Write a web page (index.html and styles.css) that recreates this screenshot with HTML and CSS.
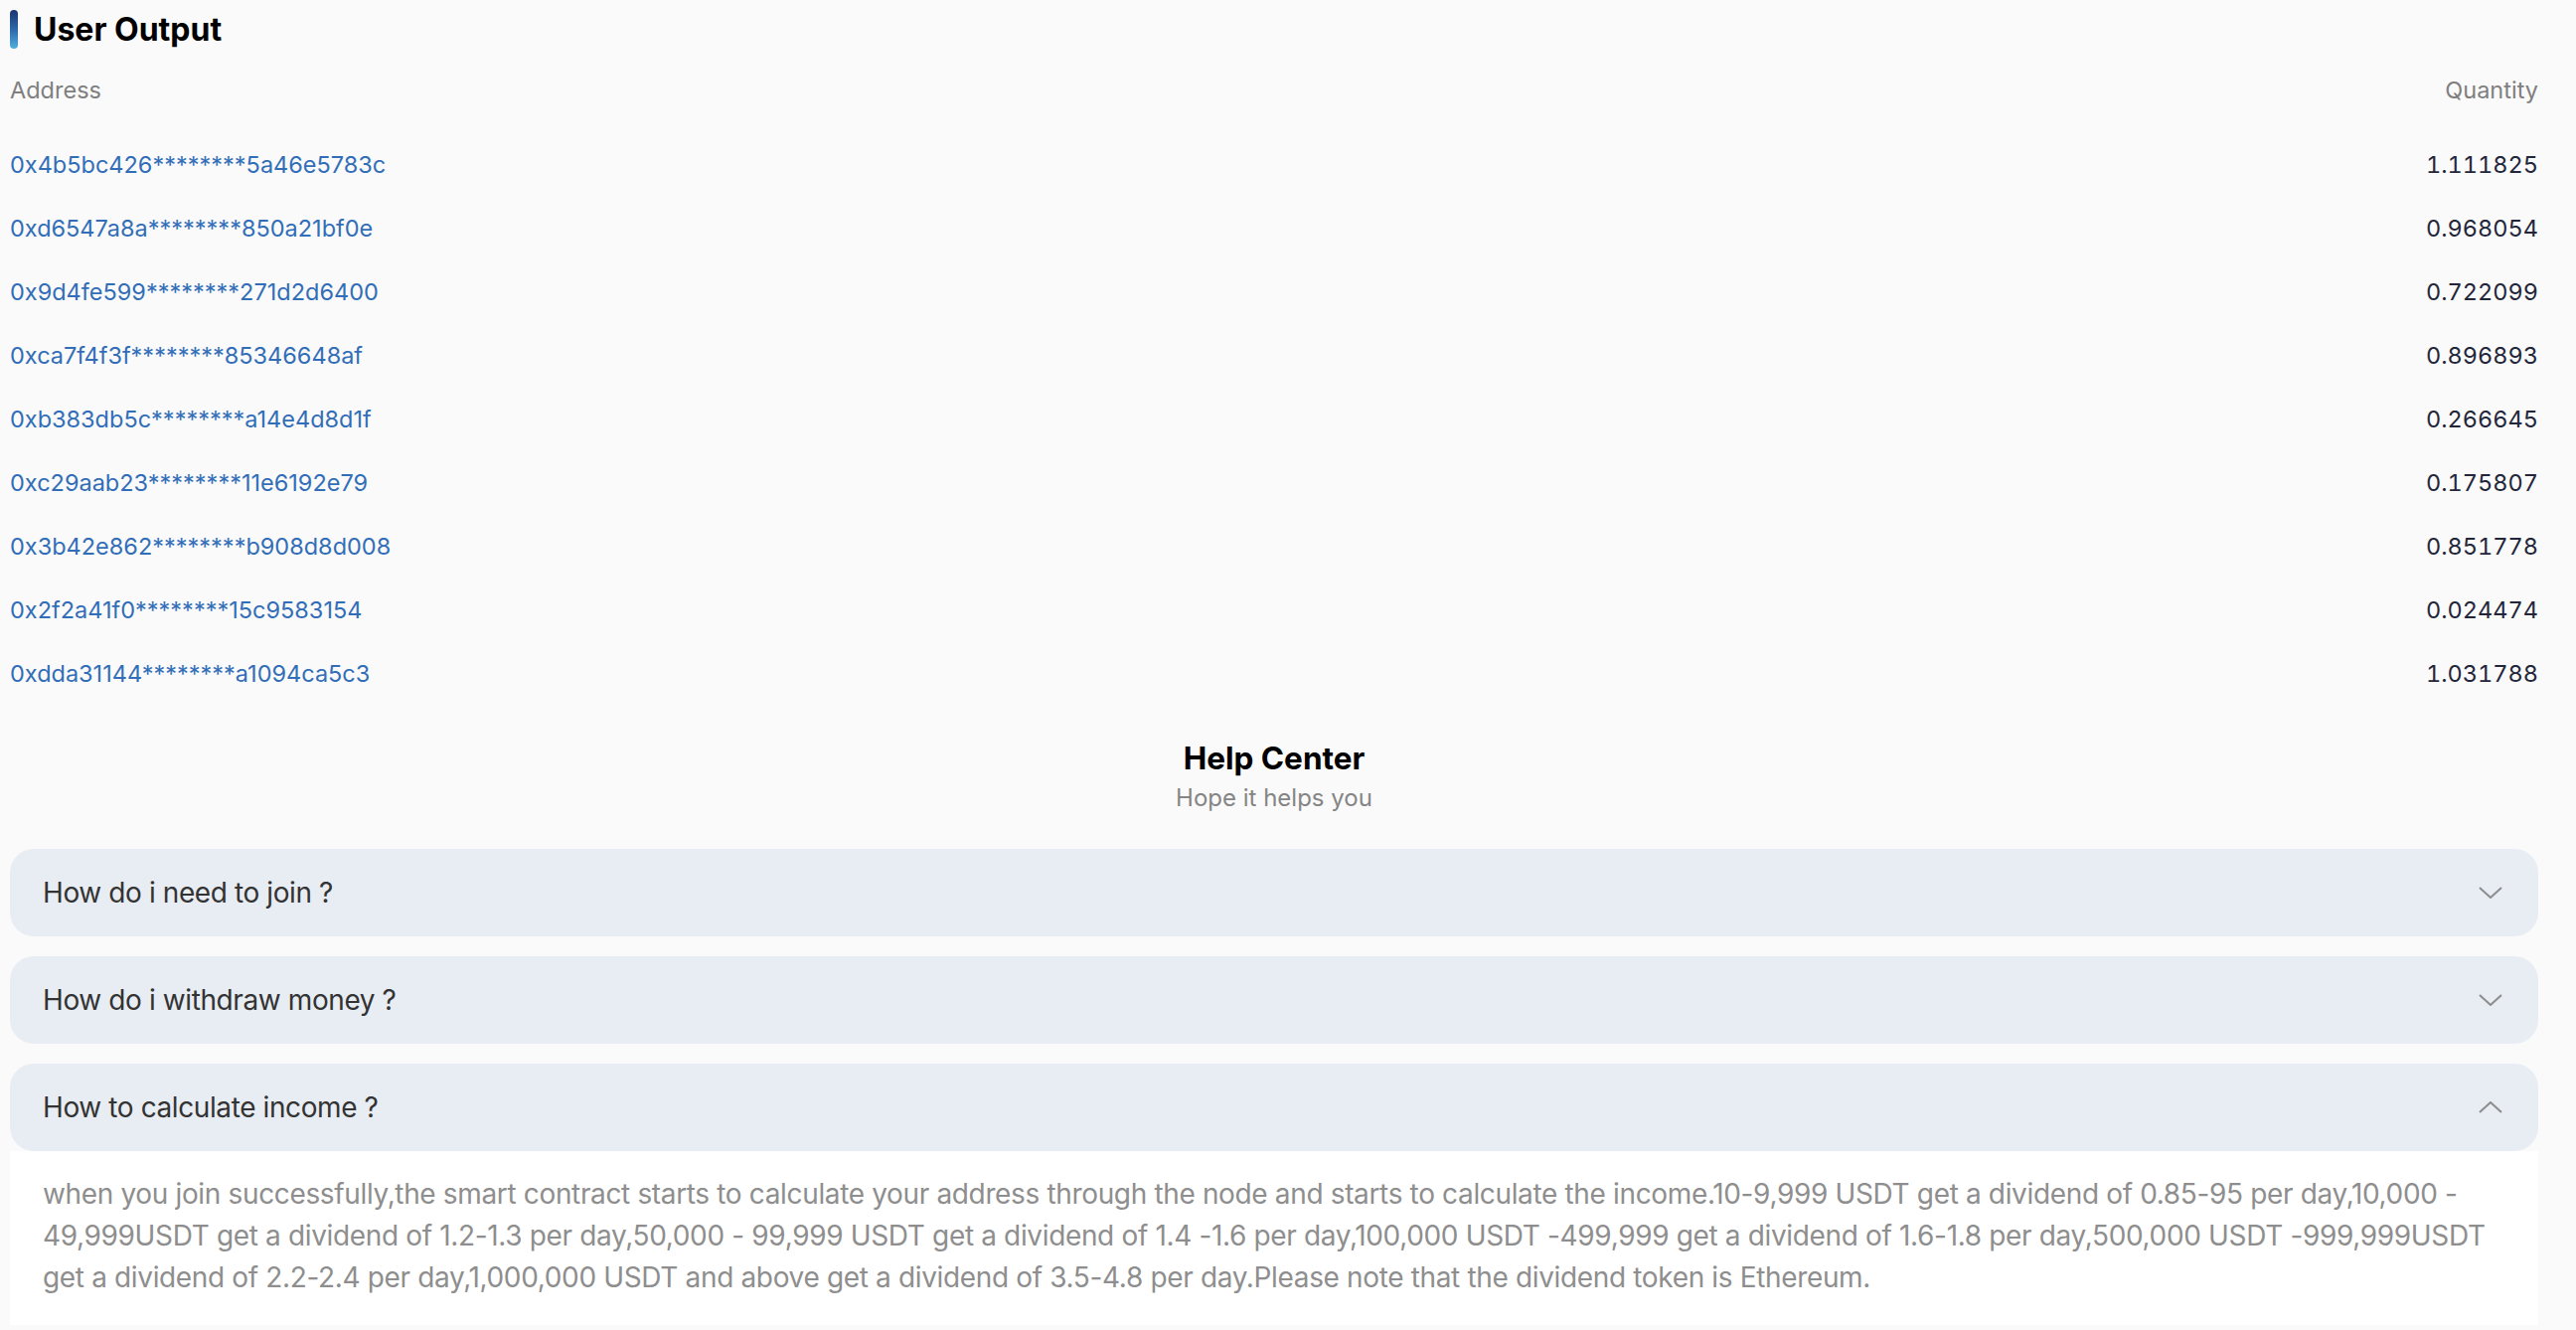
FILE: index.html
```html
<!DOCTYPE html>
<html lang="en">
<head>
<meta charset="utf-8">
<title>User Output</title>
<link rel="stylesheet" href="styles.css">
</head>
<body>
<div class="page">
  <div class="section-title">
    <span class="accent"></span>
    <h2>User Output</h2>
  </div>
  <div class="table">
    <div class="thead">
      <span>Address</span>
      <span>Quantity</span>
    </div>
    <div class="tbody">
      <div class="row"><span class="addr">0x4b5bc426********5a46e5783c</span><span class="qty">1.111825</span></div>
      <div class="row"><span class="addr">0xd6547a8a********850a21bf0e</span><span class="qty">0.968054</span></div>
      <div class="row"><span class="addr">0x9d4fe599********271d2d6400</span><span class="qty">0.722099</span></div>
      <div class="row"><span class="addr">0xca7f4f3f********85346648af</span><span class="qty">0.896893</span></div>
      <div class="row"><span class="addr">0xb383db5c********a14e4d8d1f</span><span class="qty">0.266645</span></div>
      <div class="row"><span class="addr">0xc29aab23********11e6192e79</span><span class="qty">0.175807</span></div>
      <div class="row"><span class="addr">0x3b42e862********b908d8d008</span><span class="qty">0.851778</span></div>
      <div class="row"><span class="addr">0x2f2a41f0********15c9583154</span><span class="qty">0.024474</span></div>
      <div class="row"><span class="addr">0xdda31144********a1094ca5c3</span><span class="qty">1.031788</span></div>
    </div>
  </div>

  <div class="help-head">
    <h2>Help Center</h2>
    <p>Hope it helps you</p>
  </div>

  <div class="faq">
    <div class="item">
      <div class="q">
        <span>How do i need to join ?</span>
        <svg class="chev" viewBox="0 0 24 12" width="24" height="12"><path d="M1 1 L12 11 L23 1" fill="none" stroke="#8c8c8c" stroke-width="2"/></svg>
      </div>
    </div>
    <div class="item">
      <div class="q">
        <span>How do i withdraw money ?</span>
        <svg class="chev" viewBox="0 0 24 12" width="24" height="12"><path d="M1 1 L12 11 L23 1" fill="none" stroke="#8c8c8c" stroke-width="2"/></svg>
      </div>
    </div>
    <div class="item open">
      <div class="q">
        <span>How to calculate income ?</span>
        <svg class="chev" viewBox="0 0 24 12" width="24" height="12"><path d="M1 11 L12 1 L23 11" fill="none" stroke="#8c8c8c" stroke-width="2"/></svg>
      </div>
      <div class="a">when you join successfully,the smart contract starts to calculate your address through the node and starts to calculate the income.10-9,999 USDT get a dividend of 0.85-95 per day,10,000 - 49,999USDT get a dividend of 1.2-1.3 per day,50,000 - 99,999 USDT get a dividend of 1.4 -1.6 per day,100,000 USDT -499,999 get a dividend of 1.6-1.8 per day,500,000 USDT -999,999USDT get a dividend of 2.2-2.4 per day,1,000,000 USDT and above get a dividend of 3.5-4.8 per day.Please note that the dividend token is Ethereum.</div>
    </div>
  </div>
</div>
</body>
</html>
```

FILE: styles.css
```css
html, body {
  margin: 0;
  padding: 0;
  background: #fafafa;
}
body {
  font-family: Inter, "Noto Sans", "Liberation Sans", sans-serif;
  color: #333;
}
.page {
  padding: 10px 38px 6px 10px;
}
.section-title {
  display: flex;
  align-items: center;
  gap: 16px;
  height: 39px;
}
.accent {
  width: 8px;
  height: 39px;
  border-radius: 4px;
  background: linear-gradient(180deg, #1c3470 0%, #2f6db0 55%, #4fb0dc 100%);
}
.section-title h2 {
  margin: 0;
  font-size: 32px;
  font-weight: 700;
  color: #000;
  letter-spacing: 0;
  line-height: 39px;
}
.thead {
  display: flex;
  justify-content: space-between;
  margin-top: 10px;
  height: 64px;
  line-height: 64px;
  font-size: 23.5px;
  color: #7f7f7f;
}
.tbody {
  margin-top: 11px;
}
.row {
  display: flex;
  justify-content: space-between;
  height: 64px;
  line-height: 64px;
  font-size: 23.5px;
}
.addr {
  color: #326eb8;
}
.qty {
  color: #23263a;
  font-variant-numeric: tabular-nums;
}
.help-head {
  margin-top: 35px;
  text-align: center;
}
.help-head h2 {
  margin: 0;
  font-size: 31.5px;
  line-height: 36px;
  font-weight: 700;
  color: #000;
}
.help-head p {
  margin: 7px 0 0;
  font-size: 24px;
  line-height: 30px;
  color: #858585;
}
.faq {
  margin-top: 36px;
  display: flex;
  flex-direction: column;
  gap: 20px;
}
.q {
  display: flex;
  align-items: center;
  justify-content: space-between;
  height: 88px;
  padding: 0 36px 0 33px;
  background: #e8edf3;
  border-radius: 24px;
  font-size: 28px;
  color: #333;
  letter-spacing: -0.4px;
}
.chev {
  display: block;
  flex: none;
}
.a {
  background: #fff;
  padding: 22px 33px 27px;
  font-size: 28px;
  line-height: 42px;
  color: #8e8e8e;
  letter-spacing: -0.35px;
}
```
